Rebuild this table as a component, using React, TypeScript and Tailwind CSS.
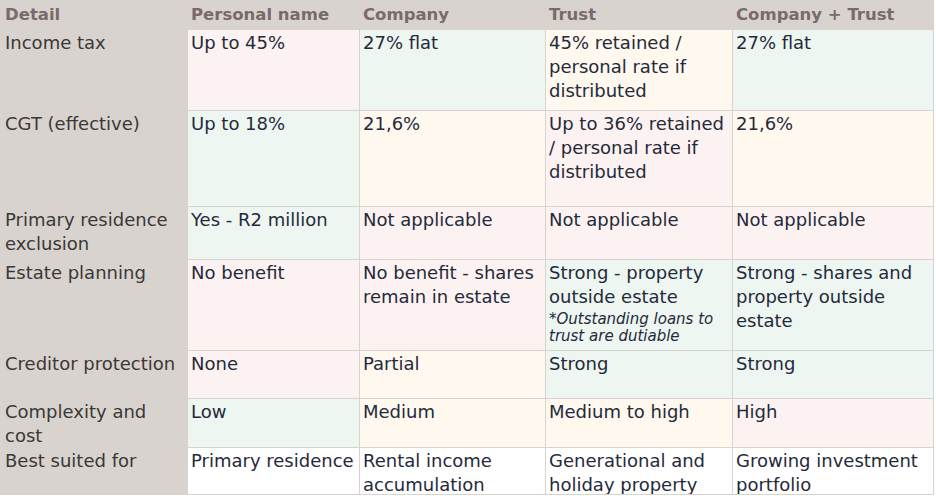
type Tone = "pink" | "green" | "cream" | "white";

const toneClass: Record<Tone, string> = {
  pink: "bg-[#fcf2f1]",
  green: "bg-[#edf6f1]",
  cream: "bg-[#fef8ef]",
  white: "bg-white",
};

interface Row {
  detail: string;
  cells: { text: string; tone: Tone; note?: string }[];
}

const headers = ["Detail", "Personal name", "Company", "Trust", "Company + Trust"];

const rows: Row[] = [
  {
    detail: "Income tax",
    cells: [
      { text: "Up to 45%", tone: "pink" },
      { text: "27% flat", tone: "green" },
      { text: "45% retained / personal rate if distributed", tone: "cream" },
      { text: "27% flat", tone: "green" },
    ],
  },
  {
    detail: "CGT (effective)",
    cells: [
      { text: "Up to 18%", tone: "green" },
      { text: "21,6%", tone: "cream" },
      { text: "Up to 36% retained / personal rate if distributed", tone: "pink" },
      { text: "21,6%", tone: "cream" },
    ],
  },
  {
    detail: "Primary residence exclusion",
    cells: [
      { text: "Yes - R2 million", tone: "green" },
      { text: "Not applicable", tone: "pink" },
      { text: "Not applicable", tone: "pink" },
      { text: "Not applicable", tone: "pink" },
    ],
  },
  {
    detail: "Estate planning",
    cells: [
      { text: "No benefit", tone: "pink" },
      { text: "No benefit - shares remain in estate", tone: "pink" },
      {
        text: "Strong - property outside estate",
        tone: "green",
        note: "*Outstanding loans to trust are dutiable",
      },
      { text: "Strong - shares and property outside estate", tone: "green" },
    ],
  },
  {
    detail: "Creditor protection",
    cells: [
      { text: "None", tone: "pink" },
      { text: "Partial", tone: "cream" },
      { text: "Strong", tone: "green" },
      { text: "Strong", tone: "green" },
    ],
  },
  {
    detail: "Complexity and cost",
    cells: [
      { text: "Low", tone: "green" },
      { text: "Medium", tone: "cream" },
      { text: "Medium to high", tone: "cream" },
      { text: "High", tone: "pink" },
    ],
  },
  {
    detail: "Best suited for",
    cells: [
      { text: "Primary residence", tone: "white" },
      { text: "Rental income accumulation", tone: "white" },
      { text: "Generational and holiday property", tone: "white" },
      { text: "Growing investment portfolio", tone: "white" },
    ],
  },
];

export default function App() {
  return (
    <div className="bg-white w-[936px] h-[496px] overflow-hidden font-['DejaVu_Sans',sans-serif]">
      <div className="grid w-fit gap-px bg-[#d8d3ce] pr-px pb-px grid-cols-[187px_171px_185px_186px_200px] grid-rows-[29px_80px_95px_52px_90px_47px_48px_46px]">
        {headers.map((h, i) => (
          <div
            key={h}
            className={`bg-[#d8d3ce] text-[#7b6a6b] font-bold text-[16.5px] leading-[24px] pt-[3px] ${
              i === 0 ? "pl-[5px]" : "pl-[3px]"
            }`}
          >
            {h}
          </div>
        ))}
        {rows.map((row) => (
          <div key={row.detail} className="contents">
            <div className="bg-[#d8d3ce] text-[#3b3836] text-[18px] leading-[24px] pl-[5px] pt-px overflow-hidden">
              {row.detail}
            </div>
            {row.cells.map((c, i) => (
              <div
                key={i}
                className={`${toneClass[c.tone]} text-[#252a3a] text-[18px] leading-[24px] pl-[3px] pr-px pt-px overflow-hidden`}
              >
                {c.text}
                {c.note && (
                  <p className="italic text-[15px] leading-[17px] mt-[2px]">{c.note}</p>
                )}
              </div>
            ))}
          </div>
        ))}
      </div>
    </div>
  );
}
